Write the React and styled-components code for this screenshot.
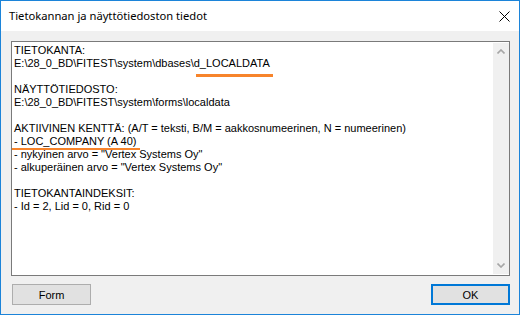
import React from "react";
import styled, { createGlobalStyle } from "styled-components";

const Global = createGlobalStyle`
  html, body { margin: 0; padding: 0; background: #ffffff; }
  body { font-family: "Liberation Sans", Arial, sans-serif; }
`;

const Window = styled.div`
  width: 520px;
  height: 315px;
  box-sizing: border-box;
  border: 1px solid #1c84d9;
  display: flex;
  flex-direction: column;
  background: #f0f0f0;
`;

const TitleBar = styled.div`
  height: 30px;
  flex: none;
  background: #ffffff;
  display: flex;
  align-items: center;
  padding-left: 8px;
`;

const Title = styled.div`
  flex: 1;
  font-family: "Noto Sans", "Liberation Sans", sans-serif;
  font-size: 11.2px;
  color: #000000;
  padding-bottom: 1px;
`;

const CloseButton = styled.div`
  width: 30px;
  height: 30px;
  display: flex;
  align-items: center;
  justify-content: center;
`;

const Body = styled.div`
  flex: 1;
  display: flex;
  flex-direction: column;
  padding: 10px 9px 9px 10px;
  gap: 8px;
`;

const TextBox = styled.div`
  height: 235px;
  box-sizing: border-box;
  border: 1px solid #7a7a7a;
  background: #ffffff;
  display: flex;
`;

const TextArea = styled.div`
  flex: 1;
  padding: 2px 0 0 2px;
  font-family: "Liberation Sans", Arial, sans-serif;
  font-size: 11px;
  color: #000000;
`;

const Line = styled.div`
  height: 13px;
  line-height: 13px;
  white-space: pre;
`;

const Mark = styled.span`
  display: inline-block;
  position: relative;
  &::after {
    content: "";
    position: absolute;
    top: ${(p) => p.$top}px;
    left: ${(p) => p.$left}px;
    right: ${(p) => p.$right}px;
    height: ${(p) => p.$thick}px;
    background: #f7842b;
  }
`;

const ScrollBar = styled.div`
  width: 16px;
  margin: 1px 0;
  background: #f0f0f0;
  display: flex;
  flex-direction: column;
  justify-content: space-between;
`;

const ScrollArrow = styled.div`
  height: 17px;
  display: flex;
  align-items: center;
  justify-content: center;
`;

const ButtonRow = styled.div`
  display: flex;
  justify-content: space-between;
  padding-left: 1px;
`;

const Button = styled.div`
  width: 79px;
  height: 21px;
  box-sizing: border-box;
  border: ${(p) => (p.$primary ? "2px solid #0078d7" : "1px solid #adadad")};
  background: #e1e1e1;
  display: flex;
  align-items: center;
  justify-content: center;
  font-family: "Liberation Sans", Arial, sans-serif;
  font-size: 11px;
  color: #000000;
`;

const Chevron = ({ down }) => (
  <svg width="8" height="5" viewBox="0 0 8 5">
    <path
      d={down ? "M0.5 0.5 L4 4 L7.5 0.5" : "M0.5 4.5 L4 1 L7.5 4.5"}
      fill="none"
      stroke="#a6a6a6"
      strokeWidth="1.6"
    />
  </svg>
);

export default function App() {
  return (
    <>
      <Global />
      <Window>
        <TitleBar>
          <Title>Tietokannan ja näyttötiedoston tiedot</Title>
          <CloseButton>
            <svg width="11" height="11" viewBox="0 0 11 11">
              <path d="M0.5 0.5 L10.5 10.5 M10.5 0.5 L0.5 10.5" stroke="#000" strokeWidth="1" />
            </svg>
          </CloseButton>
        </TitleBar>
        <Body>
          <TextBox>
            <TextArea>
              <Line>TIETOKANTA:</Line>
              <Line>
                E:\28_0_BD\FITEST\system\dbases\
                <Mark $top={17} $left={2} $right={-3} $thick={3}>d_LOCALDATA</Mark>
              </Line>
              <Line />
              <Line>NÄYTTÖTIEDOSTO:</Line>
              <Line>E:\28_0_BD\FITEST\system\forms\localdata</Line>
              <Line />
              <Line>AKTIIVINEN KENTTÄ: (A/T = teksti, B/M = aakkosnumeerinen, N = numeerinen)</Line>
              <Line>
                <Mark $top={13} $left={-2} $right={-4} $thick={2}>- LOC_COMPANY (A 40)</Mark>
              </Line>
              <Line>- nykyinen arvo = "Vertex Systems Oy"</Line>
              <Line>- alkuperäinen arvo = "Vertex Systems Oy"</Line>
              <Line />
              <Line>TIETOKANTAINDEKSIT:</Line>
              <Line>- Id = 2, Lid = 0, Rid = 0</Line>
            </TextArea>
            <ScrollBar>
              <ScrollArrow>
                <Chevron />
              </ScrollArrow>
              <ScrollArrow>
                <Chevron down />
              </ScrollArrow>
            </ScrollBar>
          </TextBox>
          <ButtonRow>
            <Button>Form</Button>
            <Button $primary>OK</Button>
          </ButtonRow>
        </Body>
      </Window>
    </>
  );
}
